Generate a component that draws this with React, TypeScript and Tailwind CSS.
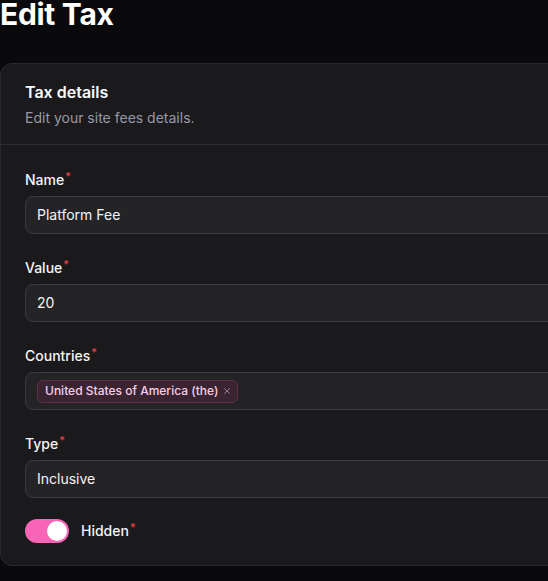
import { X } from "lucide-react";

function Star() {
  return <span className="relative top-[-5px] ml-[1px] text-[11px] leading-none text-[#ef4444]">*</span>;
}

function Label({ children }: { children: string }) {
  return (
    <label className="block h-5 text-sm font-medium leading-5 text-[#f4f4f5] mb-[6px]">
      {children}
      <Star />
    </label>
  );
}

function App() {
  return (
    <div
      className="min-h-screen w-[548px] overflow-hidden bg-[#0a0a0c] text-white"
      style={{ fontFamily: "Inter, 'Noto Sans', sans-serif" }}
    >
      <h1 className="text-3xl font-bold leading-9 mt-[-4px] tracking-[-0.01em]">Edit Tax</h1>

      {/* Card */}
      <div className="mt-[31px] w-[620px] rounded-xl border border-[#2a2a2d] bg-[#1a1a1c]">
        <div className="px-6 pt-4 pb-4 border-b border-[#2c2c30] flex flex-col gap-1">
          <h2 className="text-base font-semibold leading-6 text-[#fafafa]">Tax details</h2>
          <p className="text-sm leading-5 text-[#9899a6]">Edit your site fees details.</p>
        </div>

        <div className="px-6 pt-[25px] pb-[22px] flex flex-col gap-6">
          <div>
            <Label>Name</Label>
            <div className="h-[38px] rounded-lg border border-[#3b3b3f] bg-[#242426] pl-[11px] flex items-center text-sm text-[#f4f4f5]">
              Platform Fee
            </div>
          </div>

          <div>
            <Label>Value</Label>
            <div className="h-[38px] rounded-lg border border-[#3b3b3f] bg-[#242426] pl-[11px] flex items-center text-sm text-[#f4f4f5]">
              20
            </div>
          </div>

          <div>
            <Label>Countries</Label>
            <div className="h-[38px] rounded-lg border border-[#3b3b3f] bg-[#242426] pl-[11px] flex items-center">
              <span className="h-[23px] flex items-center gap-1 rounded-md border border-[#5e3049] bg-[#3a2432] pl-[7px] pr-[5px] text-xs font-medium text-[#f6cfe6]">
                United States of America (the)
                <X size={10} strokeWidth={2} className="text-[#a7889a]" />
              </span>
            </div>
          </div>

          <div>
            <Label>Type</Label>
            <div className="h-[38px] rounded-lg border border-[#3b3b3f] bg-[#242426] pl-[11px] flex items-center text-sm text-[#f4f4f5]">
              Inclusive
            </div>
          </div>

          <div className="flex items-center gap-3 mt-[-3px]">
            <div className="w-[44px] h-6 rounded-full bg-[#f865b6] flex items-center justify-end pr-[2px]">
              <div className="w-5 h-5 rounded-full bg-white" />
            </div>
            <span className="text-sm font-medium leading-5 text-[#f4f4f5]">
              Hidden
              <Star />
            </span>
          </div>
        </div>
      </div>
    </div>
  );
}

export default App;
